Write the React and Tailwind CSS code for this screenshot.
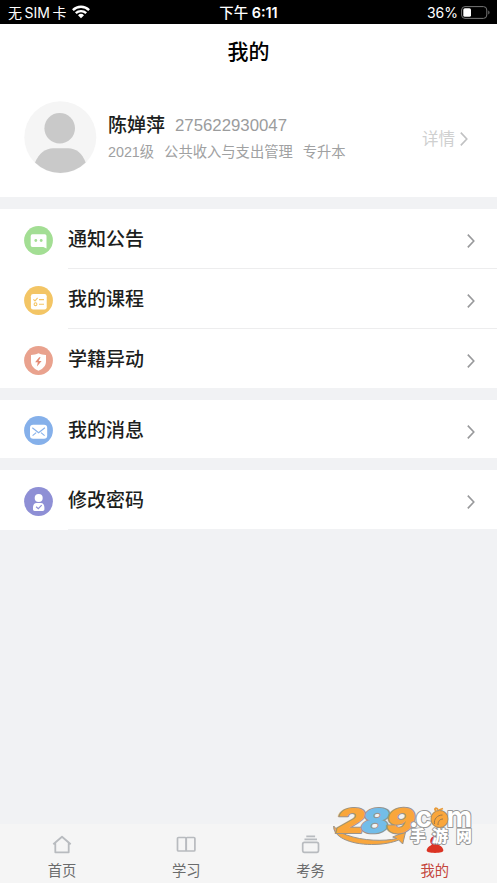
import React from 'react';

// Icons of the menu rows
function NoticeIcon() {
    return (
        <svg className="h-[29px] w-[29px]" viewBox="0 0 29 29">
            <circle cx="14.5" cy="14.5" r="14.4" fill="#a3de94" />
            <path d="M8.4 8.2h12.4a1.7 1.7 0 0 1 1.7 1.7v12.7l-3.2-1.6H8.4a1.7 1.7 0 0 1-1.7-1.7V9.9a1.7 1.7 0 0 1 1.7-1.7z" fill="#fff" />
            <circle cx="11.8" cy="14.5" r="1.4" fill="#a3de94" />
            <circle cx="17.2" cy="14.5" r="1.4" fill="#a3de94" />
        </svg>
    );
}

function CourseIcon() {
    return (
        <svg className="h-[29px] w-[29px]" viewBox="0 0 29 29">
            <circle cx="14.5" cy="14.5" r="14.4" fill="#f3c565" />
            <rect x="6.9" y="8" width="15.8" height="15.4" rx="2.2" fill="#fff" />
            <g fill="none" stroke="#f3c565" strokeWidth="1.1">
                <path d="M9.4 13.4l1.6 1.5 2.6-3M15 13.6h5M15 18.2h5" />
                <circle cx="11.5" cy="18.2" r="1.4" />
            </g>
        </svg>
    );
}

function ShieldIcon() {
    return (
        <svg className="h-[29px] w-[29px]" viewBox="0 0 29 29">
            <circle cx="14.5" cy="14.5" r="14.4" fill="#e9a28e" />
            <path d="M14.5 7.3c2.3 1.3 4.8 1.6 7.5 1.7v6.4c0 4.4-3.2 7.5-7.5 9.3C10.2 22.9 7 19.8 7 15.4V9c2.7-.1 5.2-.4 7.5-1.7z" fill="#fff" />
            <path d="M15.2 11.3l-4.1 4.9h2.7l-.8 4.3 4.6-5.6h-3l2-3.6z" fill="#e38a74" />
        </svg>
    );
}

function MessageIcon() {
    return (
        <svg className="h-[29px] w-[29px]" viewBox="0 0 29 29">
            <circle cx="14.5" cy="14.5" r="14.4" fill="#85b0ea" />
            <rect x="6" y="8.8" width="17.2" height="14" rx="3.2" fill="#fff" />
            <path d="M8.3 11.8l6.3 5 6.3-5M8.6 19.6l3.6-3M20.6 19.6l-3.6-3" fill="none" stroke="#85b0ea" strokeWidth="1.1" />
        </svg>
    );
}

function PasswordIcon() {
    return (
        <svg className="h-[29px] w-[29px]" viewBox="0 0 29 29">
            <circle cx="14.5" cy="14.5" r="14.4" fill="#8e8fd5" />
            <circle cx="14.7" cy="10.9" r="4" fill="#fff" />
            <path d="M12.5 16h4.4c2.2 0 3.5 2 3.5 4.3v1.9c0 1-.7 1.700-1.700 1.700h-8c-1 0-1.700-.7-1.700-1.700v-1.900c0-2.300 1.300-4.300 3.500-4.300z" fill="#fff" />
            <path d="M12.1 19.7l2.2 2 3.4-3.5" fill="none" stroke="#8e8fd5" strokeWidth="1.2" />
        </svg>
    );
}

function Chevron({ className }) {
    return (
        <svg className={className} viewBox="0 0 8 14" fill="none" stroke="currentColor" strokeWidth="1.6">
            <path d="M.8.6L6.8 7 .8 13.4" />
        </svg>
    );
}

const groups = [
    [
        { label: '通知公告', Icon: NoticeIcon },
        { label: '我的课程', Icon: CourseIcon },
        { label: '学籍异动', Icon: ShieldIcon },
    ],
    [{ label: '我的消息', Icon: MessageIcon }],
    [{ label: '修改密码', Icon: PasswordIcon, edge: true }],
];

function MenuRow({ label, Icon, divider, edge }) {
    const border = divider ? 'border-b border-[#ededee]' : edge ? 'border-b border-[#f1f2f4]' : '';
    return (
        <div className={`flex pl-6 ${border ? 'h-[60px]' : 'h-[58.7px]'}`}>
            <div className="w-[44px] shrink-0 pt-[16.5px]">
                <Icon />
            </div>
            <div className={`flex flex-1 items-start justify-between pr-[22.5px] ${border}`}>
                <span className="pt-[17px] text-[19px] leading-[28px] font-medium text-[#1c1e20]">{label}</span>
                <Chevron className="mt-[25px] h-[14px] w-2 text-[#98999b]" />
            </div>
        </div>
    );
}

function StatusBar() {
    return (
        <div className="grid h-6 shrink-0 grid-cols-3 items-center bg-black pt-px text-[14px] leading-[23px] text-white">
            <div className="flex items-center pl-2">
                <span className="whitespace-nowrap">无<span className="mx-[2.5px]">SIM</span>卡</span>
                <svg className="mb-[2px] ml-[6px] h-[14px] w-[18px]" viewBox="0 0 18 14" fill="none" stroke="#fff" strokeWidth="2.4">
                    <path d="M.9 5.1a11.6 11.6 0 0 1 16.2 0M3.8 8.2a7.5 7.5 0 0 1 10.4 0" />
                    <path d="M9 13.3L6 10.3a4.3 4.3 0 0 1 6 0z" fill="#fff" stroke="none" />
                </svg>
            </div>
            <div className="text-center text-[14.4px] font-semibold"><span className="font-medium">下午</span> 6:11</div>
            <div className="flex items-center justify-end pr-[7px]">
                <span>36%</span>
                <svg className="mb-px ml-[3px] h-[13px] w-[29px]" viewBox="0 0 29 13">
                    <rect x=".6" y=".6" width="25.2" height="11.8" rx="3.4" fill="none" stroke="#777" />
                    <rect x="2.3" y="2.2" width="7.7" height="8.6" rx="1.6" fill="#fff" />
                    <path d="M27.3 4.5v4c1.6-.6 1.6-3.4 0-4z" fill="#777" />
                </svg>
            </div>
        </div>
    );
}

function Profile() {
    return (
        <div className="flex h-[117px] items-start bg-white pt-[21px] pr-[29px] pl-6">
            <svg className="h-[73px] w-[73px] shrink-0" viewBox="0 0 73 73">
                <circle cx="36.3" cy="36.3" r="36" fill="#f5f5f5" />
                <circle cx="35.7" cy="27.2" r="15.3" fill="#c9c9c9" />
                <path d="M11 61.5C15 52 22 47.2 29 47.2h15C52 47.2 58 52 61.7 61.5A36 36 0 0 1 11 61.5z" fill="#c9c9c9" />
            </svg>
            <div className="ml-[11px] flex-1 whitespace-nowrap">
                <div className="flex items-center pt-[11px] leading-[28px]">
                    <span className="text-[19px] font-medium text-[#1c1e20]">陈婵萍</span>
                    <span className="ml-[10px] font-['Liberation_Sans'] text-[16.8px] text-[#9b9c9d]">275622930047</span>
                </div>
                <div className="flex gap-[10px] text-[14.3px] leading-[24px] text-[#a0a1a2]">
                    <span><span className="font-['Liberation_Sans']">2021</span>级</span>
                    <span>公共收入与支出管理</span>
                    <span>专升本</span>
                </div>
            </div>
            <div className="flex items-center pt-[26px] text-[#cfd0d0]">
                <span className="text-[16.5px] leading-6">详情</span>
                <Chevron className="ml-[5px] h-[14px] w-2 text-[#c0c1c2]" />
            </div>
        </div>
    );
}

function TabBar() {
    return (
        <nav className="relative grid h-[59px] grid-cols-4 bg-[#f5f5f5] text-[14.3px] leading-5 text-[#6a6b6c]">
            <div className="flex flex-col items-center pt-[11px]">
                <svg className="h-[20px] w-[20px]" viewBox="0 0 20 20" fill="none" stroke="#b8bbbf" strokeWidth="1.8" strokeLinejoin="round">
                    <path d="M1.3 9.2L10 1.7 18.7 9.2M3.3 7.7v9.6h13.4V7.7" />
                </svg>
                <span className="mt-[6px]">首页</span>
            </div>
            <div className="flex flex-col items-center pt-[11px]">
                <svg className="h-[20px] w-[20px]" viewBox="0 0 20 20" fill="none" stroke="#b8bbbf" strokeWidth="1.7">
                    <rect x="1.5" y="2.5" width="8.7" height="13.5" rx="1" />
                    <rect x="10.2" y="2.5" width="8.7" height="13.5" rx="1" />
                </svg>
                <span className="mt-[6px]">学习</span>
            </div>
            <div className="flex flex-col items-center pt-[11px]">
                <svg className="h-[20px] w-[20px]" viewBox="0 0 20 20" fill="none" stroke="#b8bbbf" strokeWidth="1.7">
                    <path d="M5.3 1.3h8.8M3.5 4.3h12.5" />
                    <rect x="1.7" y="7.3" width="15.8" height="10" rx="1.7" />
                </svg>
                <span className="mt-[6px]">考务</span>
            </div>
            <div className="flex flex-col items-center pt-[11px] text-[#c4463c]">
                <svg className="h-[20px] w-[20px]" viewBox="0 0 20 20" fill="#db3424">
                    <circle cx="10.2" cy="6" r="5" />
                    <path d="M7.3 9.8h5.8c2.8.8 5.2 3.2 5.2 5.8 0 1.7-3 2.4-8.3 2.4s-8.3-.7-8.3-2.4c0-2.6 2.8-5 5.6-5.8z" />
                </svg>
                <span className="mt-[6px]">我的</span>
            </div>
            <SiteMark />
        </nav>
    );
}

// Site logo floating over the tab bar
function SiteMark() {
    return (
        <svg className="absolute top-[-24px] right-[22px] h-[52px] w-[145px]" viewBox="330 800 145 52">
            <g stroke="#9a948c" strokeLinejoin="round">
                <path d="M333.7 826c-1 10 15 18.500 38 18.500 12 0 21-2 27-4.500l4 4 3-12.500-13 5.500 4 1.500c-12 3-34 2.500-50-3.500-6-2-10-5-13-9z" fill="#f9a63c" />
                <g fontFamily="Inter" fontWeight="900" fontSize="34" strokeWidth="2" paintOrder="stroke" transform="translate(333 832.5) skewX(-13)">
                    <text x="1" y="0" textLength="28.5" lengthAdjust="spacingAndGlyphs" fill="#f9a63c">2</text>
                    <text x="26" y="0" textLength="28" lengthAdjust="spacingAndGlyphs" fill="#73bde9">8</text>
                    <text x="51" y="0" textLength="28.5" lengthAdjust="spacingAndGlyphs" fill="#f9a63c">9</text>
                </g>
            </g>
            <g fill="#fff" stroke="#979797" strokeLinejoin="round" paintOrder="stroke">
                <text y="826.5" fontFamily="Inter" fontWeight="700" fontSize="28" strokeWidth="2">
                    <tspan x="409">.</tspan>
                    <tspan x="415.500">c</tspan>
                    <tspan x="431" fill="#f9a63c">o</tspan>
                    <tspan x="446.500">m</tspan>
                </text>
                <text x="410 432 456" y="841.5" fontFamily="Noto Sans CJK SC" fontWeight="900" fontSize="16" strokeWidth="1.8">手游网</text>
            </g>
            <circle cx="439.5" cy="819" r="8.5" fill="#f9a63c" stroke="#a98a5c" strokeWidth=".8" />
            <path d="M436 811c-3-3 1-4 2-1M439 810l4-1.5" fill="none" stroke="#e79a38" strokeWidth="1.8" />
            <path d="M434.5 824c-1-5 3-9 8-9M438 825c0-4 2-6 5-6" fill="none" stroke="#9a784b" />
        </svg>
    );
}

export default function App() {
    return (
        <div className="flex h-[883px] w-[497px] flex-col overflow-hidden bg-[#f1f2f4] font-['Inter','Noto_Sans_CJK_SC',sans-serif]">
            <StatusBar />
            <h1 className="h-[56px] shrink-0 bg-white pt-[13px] text-center text-[21px] leading-[30px] font-medium text-black">我的</h1>
            <Profile />
            <main className="flex flex-1 flex-col gap-3 pt-3">
                {groups.map((rows) => (
                    <section key={rows[0].label} className="bg-white">
                        {rows.map((row, i) => (
                            <MenuRow key={row.label} {...row} divider={i < rows.length - 1} />
                        ))}
                    </section>
                ))}
            </main>
            <TabBar />
        </div>
    );
}
